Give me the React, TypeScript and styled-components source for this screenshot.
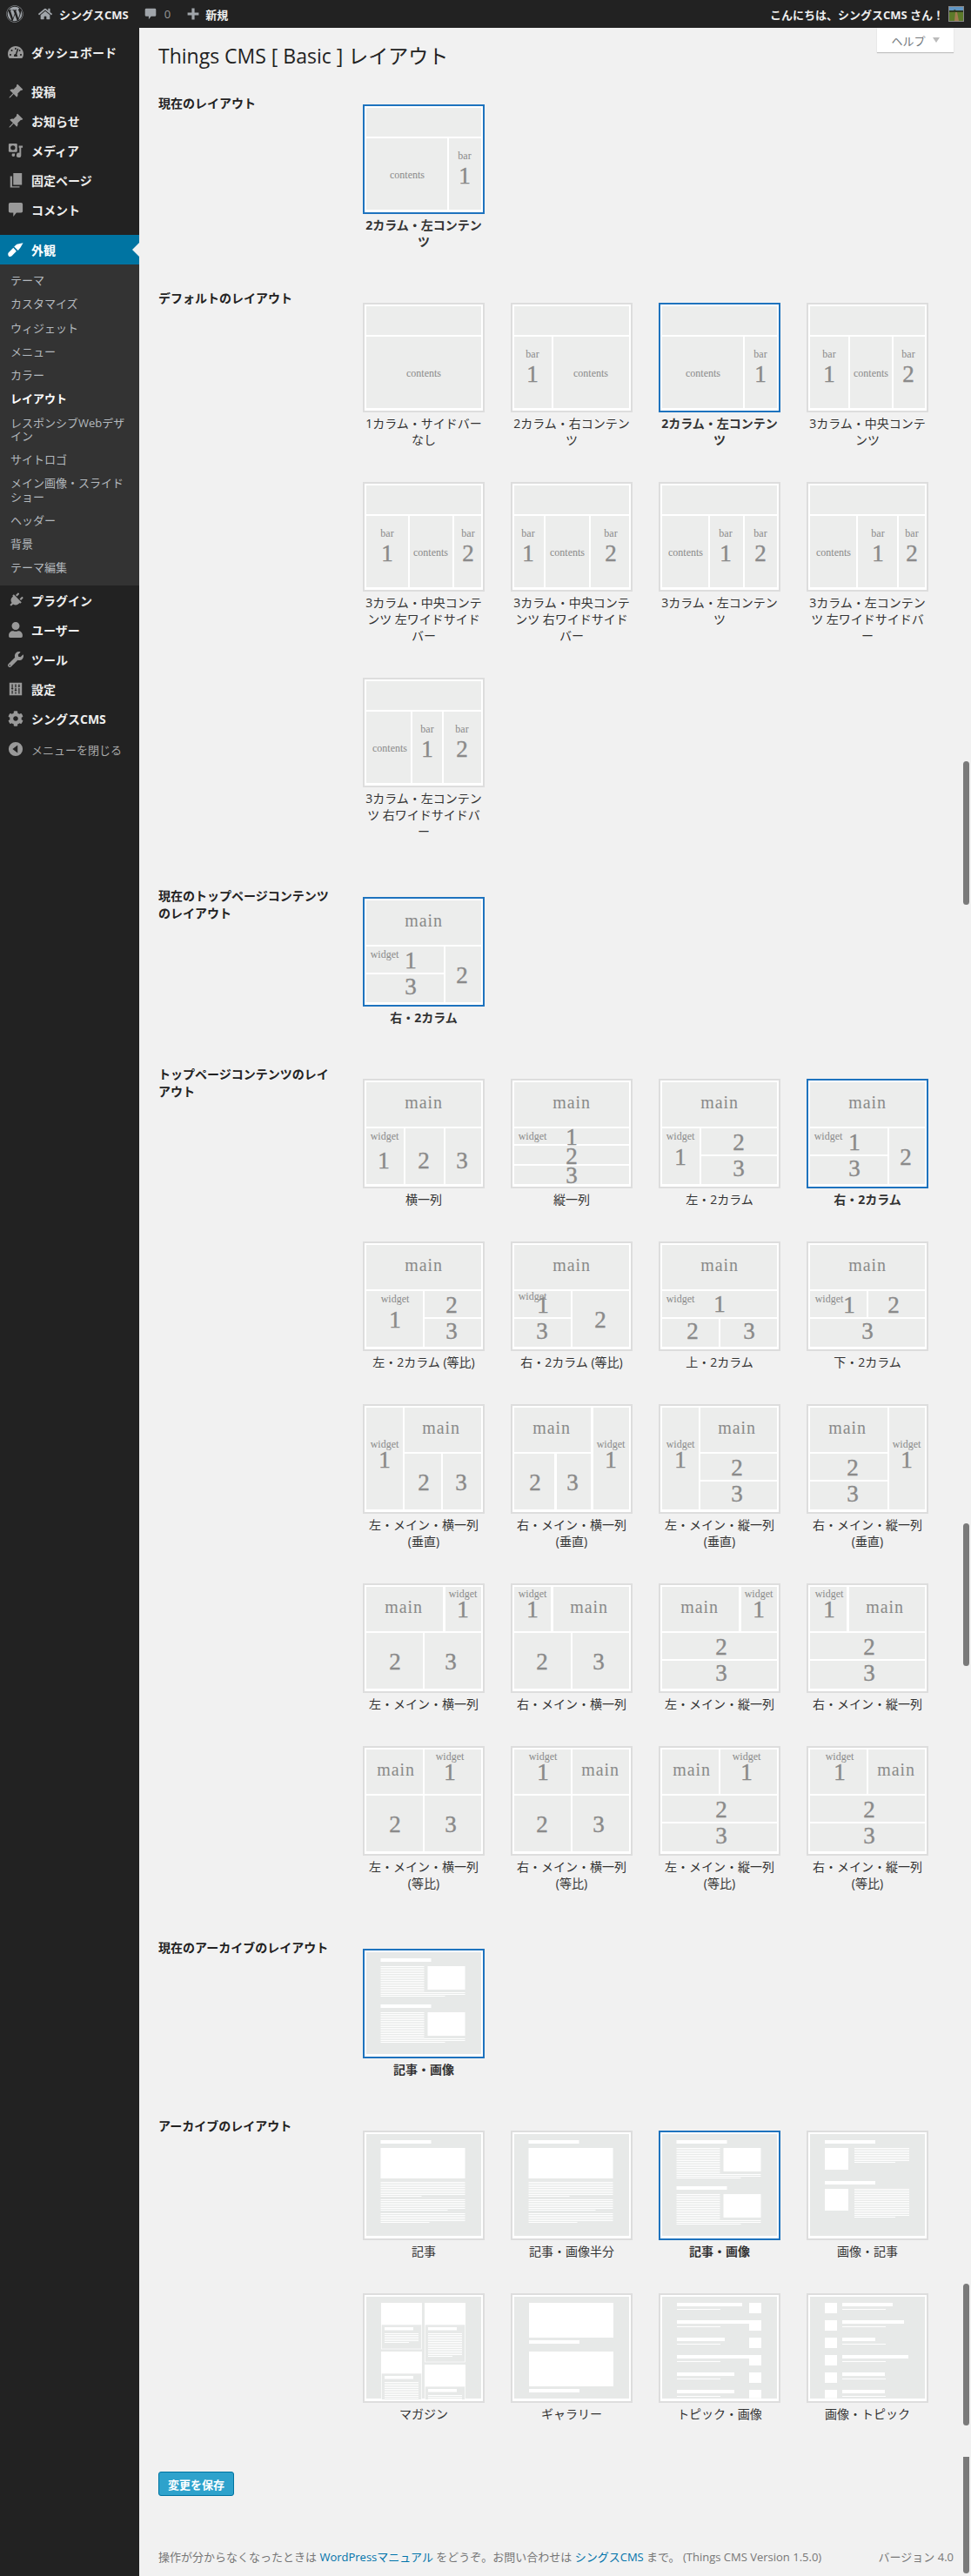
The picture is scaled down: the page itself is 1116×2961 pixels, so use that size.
import React, { FC, ReactNode } from 'react'
import styled, { createGlobalStyle, css } from 'styled-components'
import { FaWordpress, FaTachometerAlt, FaUser, FaCog, FaWrench, FaPlug, FaHome } from 'react-icons/fa'
import { BsPinAngleFill } from 'react-icons/bs'

const sans = `"Open Sans", "Noto Sans CJK JP", sans-serif`

const Global = createGlobalStyle`
  html, body { margin: 0; padding: 0; background: #f1f1f1; }
  body { font-family: ${sans}; font-size: 13px; color: #444; }
  * { box-sizing: border-box; }
`

const Page = styled.div`
  position: relative;
  width: 1116px;
  height: 2961px;
  overflow: hidden;
`

/* admin bar */
const AdminBar = styled.div`
  display: flex;
  align-items: center;
  height: 32px;
  background: #222;
  color: #eee;
  font-size: 13px;
  font-weight: 700;
`
const BarIcon = styled.span<{ $left: number; $size?: number }>`
  display: flex;
  margin-left: ${(p) => p.$left}px;
  color: #a0a5aa;
  svg {
    display: block;
    width: ${(p) => p.$size ?? 16}px;
    height: ${(p) => p.$size ?? 16}px;
  }
`
const BarText = styled.span<{ $left: number; $muted?: boolean }>`
  margin-left: ${(p) => p.$left}px;
  ${(p) =>
    p.$muted &&
    css`
      color: #999;
      font-weight: 400;
    `}
`
const Greeting = styled.div`
  display: flex;
  align-items: center;
  gap: 5px;
  margin-left: auto;
  padding-right: 8px;
`
const Avatar = styled.svg`
  display: block;
  width: 18px;
  height: 18px;
  border: 1px solid #888;
`

/* sidebar */
const Shell = styled.div`
  display: flex;
  height: 2929px;
`
const Sidebar = styled.nav`
  flex: 0 0 160px;
  padding-top: 11px;
  background: #222;
`
const MenuRow = styled.div<{ $active?: boolean }>`
  position: relative;
  display: flex;
  align-items: center;
  height: 34px;
  padding-left: 9px;
  font-size: 14px;
  font-weight: 700;
  color: #eee;
  ${(p) =>
    p.$active &&
    css`
      background: #0074a2;
      color: #fff;
      &::after {
        content: '';
        position: absolute;
        right: 0;
        top: 9px;
        border: 8px solid transparent;
        border-right-color: #f1f1f1;
        border-left-width: 0;
      }
    `}
`
const MenuIcon = styled.span<{ $active?: boolean }>`
  display: flex;
  align-items: center;
  justify-content: center;
  flex: 0 0 18px;
  height: 18px;
  margin-right: 9px;
  color: ${(p) => (p.$active ? '#fff' : '#999')};
  svg {
    display: block;
    width: 18px;
    height: 18px;
  }
`
const Separator = styled.div<{ $h: number }>`
  height: ${(p) => p.$h}px;
`
const SubMenu = styled.div`
  height: 369px;
  padding: 5px 12px 7px;
  background: #333;
`
const SubItem = styled.div<{ $current?: boolean }>`
  padding: 6px 0;
  font-size: 13px;
  line-height: 15.25px;
  color: ${(p) => (p.$current ? '#fff' : '#b4b9be')};
  font-weight: ${(p) => (p.$current ? 700 : 400)};
`
const CollapseRow = styled.div`
  display: flex;
  align-items: center;
  height: 36px;
  padding-left: 9px;
  font-size: 13px;
  color: #aaa;
`

/* main column */
const Main = styled.main`
  flex: 1;
  padding: 18px 20px 0 22px;
`
const Title = styled.h1`
  margin: 0 0 30px;
  font-size: 23px;
  font-weight: 400;
  line-height: 29px;
  color: #222;
`
const Section = styled.section`
  display: flex;
`
const SectionHead = styled.h2`
  flex: 0 0 200px;
  margin: 0 35px 0 0;
  font-size: 14px;
  font-weight: 700;
  line-height: 20px;
  color: #222;
`
const SectionBody = styled.div<{ $current?: boolean }>`
  padding: ${(p) => (p.$current ? '11px 0 7px' : '15px 0 16px')};
`
const ThumbGrid = styled.div`
  display: grid;
  grid-template-columns: repeat(4, 140px);
  column-gap: 30px;
`
const ThumbItem = styled.div`
  width: 140px;
  margin-bottom: 39px;
`
const ThumbBox = styled.div<{ $selected?: boolean }>`
  width: 140px;
  height: 126px;
  padding: 2px;
  border: 2px solid ${(p) => (p.$selected ? '#1e73be' : '#ddd')};
  background: #fff;
  svg {
    display: block;
    width: 132px;
    height: 118px;
  }
`
const ThumbLabel = styled.div<{ $selected?: boolean }>`
  margin-top: 3px;
  font-size: 14px;
  line-height: 19px;
  text-align: center;
  white-space: pre-line;
  color: #333;
  font-weight: ${(p) => (p.$selected ? 700 : 400)};
`
const Cell = styled.rect`
  fill: #ecedec;
`
const Ink = styled.text<{ $size: number; $spacing: number; $stroke: number }>`
  fill: #8a8a8a;
  stroke: #8a8a8a;
  stroke-width: ${(p) => p.$stroke};
  font-family: 'Liberation Serif', serif;
  font-size: ${(p) => p.$size}px;
  letter-spacing: ${(p) => p.$spacing}px;
  text-anchor: middle;
`
const SheetBg = styled.rect`
  fill: #e7e9e8;
`
const Bar = styled.rect`
  fill: #fff;
`
const Framed = styled.rect`
  fill: #e7e9e8;
  stroke: #fff;
  stroke-width: 0.7;
`
const SaveButton = styled.button`
  display: block;
  width: 87px;
  height: 28px;
  margin-top: 2px;
  padding: 0;
  border: 1px solid #0074a2;
  border-radius: 3px;
  background: #2ea2cc;
  color: #fff;
  font-family: ${sans};
  font-size: 13px;
  font-weight: 700;
`
const Footer = styled.footer`
  display: flex;
  justify-content: space-between;
  margin-top: 60px;
  font-size: 13px;
  line-height: 20px;
  color: #777;
`
const FootLink = styled.a`
  color: #0073aa;
`
const HelpTab = styled.div`
  position: absolute;
  top: 32px;
  left: 1008px;
  display: flex;
  align-items: center;
  justify-content: center;
  gap: 8px;
  width: 88px;
  height: 28px;
  background: #fff;
  box-shadow: 0 1px 1px rgba(0, 0, 0, 0.2);
  font-size: 13px;
  color: #72777c;
  &::after {
    content: '';
    border: 4px solid transparent;
    border-top: 6px solid #bbb;
    border-bottom-width: 0;
  }
`
const ScrollMark = styled.div<{ $top: number; $h: number; $square?: boolean }>`
  position: absolute;
  left: 1107px;
  top: ${(p) => p.$top}px;
  width: 7px;
  height: ${(p) => p.$h}px;
  background: #7a7a7a;
  border-radius: ${(p) => (p.$square ? '0 0 4px 4px' : '4px')};
`

/* thumbnails */
type Rect = [number, number, number, number]
type Label = [string, number, number]
interface Diagram {
  cells: Rect[]
  texts: Label[]
}

const isDigit = (t: string) => /^\d$/.test(t)
const sizeOf = (t: string) => (isDigit(t) ? 27 : t === 'main' ? 20 : 12)

const Diagram: FC<Diagram> = ({ cells, texts }) => (
  <svg viewBox="0 0 132 118">
    {cells.map(([a, b, c, d], i) => (
      <Cell key={i} x={a} y={b} width={c - a} height={d - b} />
    ))}
    {texts.map(([t, x, y], i) => (
      <Ink
        key={i}
        $size={sizeOf(t)}
        $spacing={t === 'main' ? 0.9 : 0}
        $stroke={isDigit(t) ? 0.4 : 0}
        x={x}
        y={y}
      >
        {t}
      </Ink>
    ))}
  </svg>
)

const head: Rect = [0, 0, 132, 33]
const col = (a: number, b: number): Rect => [a, 35, b, 117]
const barAt = (x: number, n: string): Label[] => [
  ['bar', x, 59],
  [n, x, 87],
]
const contentsAt = (x: number): Label => ['contents', x, 81]

const defaults: { label: string; selected?: boolean; d: Diagram }[] = [
  { label: '1カラム・サイドバー\nなし', d: { cells: [head, col(0, 132)], texts: [contentsAt(66)] } },
  {
    label: '2カラム・右コンテン\nツ',
    d: { cells: [head, col(0, 43), col(45, 132)], texts: [...barAt(21, '1'), contentsAt(88)] },
  },
  {
    label: '2カラム・左コンテン\nツ',
    selected: true,
    d: { cells: [head, col(0, 93), col(95, 132)], texts: [contentsAt(47), ...barAt(113, '1')] },
  },
  {
    label: '3カラム・中央コンテ\nンツ',
    d: {
      cells: [head, col(0, 44), col(46, 94), col(96, 132)],
      texts: [...barAt(22, '1'), contentsAt(70), ...barAt(113, '2')],
    },
  },
  {
    label: '3カラム・中央コンテ\nンツ 左ワイドサイド\nバー',
    d: {
      cells: [head, col(0, 48), col(50, 99), col(101, 132)],
      texts: [...barAt(24, '1'), contentsAt(74), ...barAt(117, '2')],
    },
  },
  {
    label: '3カラム・中央コンテ\nンツ 右ワイドサイド\nバー',
    d: {
      cells: [head, col(0, 34), col(36, 86), col(88, 132)],
      texts: [...barAt(16, '1'), contentsAt(61), ...barAt(111, '2')],
    },
  },
  {
    label: '3カラム・左コンテン\nツ',
    d: {
      cells: [head, col(0, 53), col(55, 93), col(95, 132)],
      texts: [contentsAt(27), ...barAt(73, '1'), ...barAt(113, '2')],
    },
  },
  {
    label: '3カラム・左コンテン\nツ 左ワイドサイドバ\nー',
    d: {
      cells: [head, col(0, 53), col(55, 100), col(102, 132)],
      texts: [contentsAt(27), ...barAt(78, '1'), ...barAt(117, '2')],
    },
  },
  {
    label: '3カラム・左コンテン\nツ 右ワイドサイドバ\nー',
    d: {
      cells: [head, col(0, 51), col(53, 87), col(89, 132)],
      texts: [contentsAt(27), ...barAt(70, '1'), ...barAt(110, '2')],
    },
  },
]

const mainTop: Rect = [0, 0, 132, 51]
const mainL: Label = ['main', 66, 30]

// top page layouts, in the order they are listed
const right2: Diagram = {
  cells: [mainTop, [0, 53, 89, 83], [0, 85, 89, 117], [91, 53, 132, 117]],
  texts: [mainL, ['widget', 21, 66], ['1', 51, 78], ['3', 51, 108], ['2', 110, 95]],
}

const topPage: { label: string; selected?: boolean; d: Diagram }[] = [
  {
    label: '横一列',
    d: {
      cells: [mainTop, [0, 53, 43, 117], [45, 53, 89, 117], [91, 53, 132, 117]],
      texts: [mainL, ['widget', 21, 66], ['1', 20, 99], ['2', 66, 99], ['3', 110, 99]],
    },
  },
  {
    label: '縦一列',
    d: {
      cells: [mainTop, [0, 53, 132, 71], [0, 73, 132, 94], [0, 96, 132, 117]],
      texts: [mainL, ['widget', 21, 66], ['1', 66, 72], ['2', 66, 94], ['3', 66, 116]],
    },
  },
  {
    label: '左・2カラム',
    d: {
      cells: [mainTop, [0, 53, 43, 117], [45, 53, 132, 83], [45, 85, 132, 117]],
      texts: [mainL, ['widget', 21, 66], ['1', 21, 95], ['2', 88, 78], ['3', 88, 108]],
    },
  },
  { label: '右・2カラム', selected: true, d: right2 },
  {
    label: '左・2カラム (等比)',
    d: {
      cells: [mainTop, [0, 53, 65, 117], [67, 53, 132, 83], [67, 85, 132, 117]],
      texts: [mainL, ['widget', 33, 66], ['1', 33, 95], ['2', 98, 78], ['3', 98, 108]],
    },
  },
  {
    label: '右・2カラム (等比)',
    d: {
      cells: [mainTop, [0, 53, 65, 83], [0, 85, 65, 117], [67, 53, 132, 117]],
      texts: [mainL, ['widget', 21, 63], ['1', 33, 78], ['3', 32, 108], ['2', 99, 95]],
    },
  },
  {
    label: '上・2カラム',
    d: {
      cells: [mainTop, [0, 53, 132, 83], [0, 85, 65, 117], [67, 85, 132, 117]],
      texts: [mainL, ['widget', 21, 66], ['1', 66, 77], ['2', 35, 108], ['3', 100, 108]],
    },
  },
  {
    label: '下・2カラム',
    d: {
      cells: [mainTop, [0, 53, 65, 83], [67, 53, 132, 83], [0, 85, 132, 117]],
      texts: [mainL, ['widget', 22, 66], ['1', 45, 78], ['2', 96, 78], ['3', 66, 108]],
    },
  },
  {
    label: '左・メイン・横一列\n(垂直)',
    d: {
      cells: [[0, 0, 42, 117], [44, 0, 132, 51], [44, 53, 86, 117], [88, 53, 132, 117]],
      texts: [['widget', 21, 46], ['1', 21, 69], ['main', 86, 30], ['2', 66, 95], ['3', 109, 95]],
    },
  },
  {
    label: '右・メイン・横一列\n(垂直)',
    d: {
      cells: [[0, 0, 88, 51], [0, 53, 46, 117], [49, 53, 88, 117], [91, 0, 132, 117]],
      texts: [['main', 43, 30], ['widget', 111, 46], ['1', 111, 69], ['2', 24, 95], ['3', 67, 95]],
    },
  },
  {
    label: '左・メイン・縦一列\n(垂直)',
    d: {
      cells: [[0, 0, 42, 117], [44, 0, 132, 51], [44, 53, 132, 83], [44, 85, 132, 117]],
      texts: [['widget', 21, 46], ['1', 21, 69], ['main', 86, 30], ['2', 86, 78], ['3', 86, 108]],
    },
  },
  {
    label: '右・メイン・縦一列\n(垂直)',
    d: {
      cells: [[0, 0, 89, 51], [0, 53, 89, 83], [0, 85, 89, 117], [91, 0, 132, 117]],
      texts: [['main', 43, 30], ['widget', 111, 46], ['1', 111, 69], ['2', 49, 78], ['3', 49, 108]],
    },
  },
  {
    label: '左・メイン・横一列',
    d: {
      cells: [[0, 0, 88, 51], [91, 0, 132, 51], [0, 53, 65, 117], [67, 53, 132, 117]],
      texts: [['main', 43, 30], ['widget', 111, 12], ['1', 111, 35], ['2', 33, 95], ['3', 97, 95]],
    },
  },
  {
    label: '右・メイン・横一列',
    d: {
      cells: [[0, 0, 42, 51], [45, 0, 132, 51], [0, 53, 65, 117], [67, 53, 132, 117]],
      texts: [['widget', 21, 12], ['1', 21, 35], ['main', 86, 30], ['2', 32, 95], ['3', 97, 95]],
    },
  },
  {
    label: '左・メイン・縦一列',
    d: {
      cells: [[0, 0, 88, 51], [91, 0, 132, 51], [0, 53, 132, 83], [0, 85, 132, 117]],
      texts: [['main', 43, 30], ['widget', 111, 12], ['1', 111, 35], ['2', 68, 78], ['3', 68, 108]],
    },
  },
  {
    label: '右・メイン・縦一列',
    d: {
      cells: [[0, 0, 42, 51], [45, 0, 132, 51], [0, 53, 132, 83], [0, 85, 132, 117]],
      texts: [['widget', 22, 12], ['1', 22, 35], ['main', 86, 30], ['2', 68, 78], ['3', 68, 108]],
    },
  },
  {
    label: '左・メイン・横一列\n(等比)',
    d: {
      cells: [[0, 0, 65, 51], [67, 0, 132, 51], [0, 53, 65, 117], [67, 53, 132, 117]],
      texts: [['main', 34, 30], ['widget', 96, 12], ['1', 96, 35], ['2', 33, 95], ['3', 97, 95]],
    },
  },
  {
    label: '右・メイン・横一列\n(等比)',
    d: {
      cells: [[0, 0, 65, 51], [67, 0, 132, 51], [0, 53, 65, 117], [67, 53, 132, 117]],
      texts: [['widget', 33, 12], ['1', 33, 35], ['main', 99, 30], ['2', 32, 95], ['3', 97, 95]],
    },
  },
  {
    label: '左・メイン・縦一列\n(等比)',
    d: {
      cells: [[0, 0, 65, 51], [67, 0, 132, 51], [0, 53, 132, 83], [0, 85, 132, 117]],
      texts: [['main', 34, 30], ['widget', 97, 12], ['1', 97, 35], ['2', 68, 78], ['3', 68, 108]],
    },
  },
  {
    label: '右・メイン・縦一列\n(等比)',
    d: {
      cells: [[0, 0, 65, 51], [67, 0, 132, 51], [0, 53, 132, 83], [0, 85, 132, 117]],
      texts: [['widget', 34, 12], ['1', 34, 35], ['main', 99, 30], ['2', 68, 78], ['3', 68, 108]],
    },
  },
]

const lines = (x: number, y: number, w: number, n: number, lastW: number) =>
  Array.from({ length: n }, (_, i) => (
    <Bar key={`${x}-${y}-${i}`} x={x} y={y + i * 2} width={i === n - 1 ? lastW : w} height={1} />
  ))

const Sheet: FC<{ children: ReactNode }> = ({ children }) => (
  <svg viewBox="0 0 132 118">
    <SheetBg x={0} y={0} width={132} height={117} />
    {children}
  </svg>
)

const ArticleBlock: FC<{ y: number }> = ({ y }) => (
  <>
    <Bar x={16.5} y={y} width={58} height={4} />
    {lines(16.5, y + 9, 50, 15, 50)}
    <Bar x={70.5} y={y + 9} width={43} height={27} />
    {lines(16.5, y + 39, 97, 3, 74)}
  </>
)

const ArticleSheet: FC = () => (
  <Sheet>
    <Bar x={16.5} y={7} width={58} height={4} />
    <Bar x={16.5} y={16} width={97} height={35} />
    {lines(16.5, 55, 97, 9, 47)}
    {lines(16.5, 75, 97, 7, 77)}
    {lines(16.5, 91, 97, 6, 56)}
  </Sheet>
)

const ArticleImage: FC = () => (
  <Sheet>
    <ArticleBlock y={7} />
    <ArticleBlock y={60} />
  </Sheet>
)

const ImageArticle: FC = () => (
  <Sheet>
    <Bar x={17} y={7} width={58} height={4} />
    <Bar x={17} y={16} width={27} height={25} />
    {lines(51, 16, 63, 9, 47)}
    <Bar x={17} y={54} width={58} height={4} />
    <Bar x={17} y={63} width={27} height={25} />
    {lines(51, 63, 63, 17, 47)}
  </Sheet>
)

const MagCard: FC<{ x: number; y: number; panel: number }> = ({ x, y, panel }) => (
  <>
    <Bar x={x} y={y} width={47} height={25} />
    <Framed x={x + 0.5} y={y + 25} width={46} height={panel} />
    <Bar x={x + 4} y={y + 28} width={33} height={3.5} />
    {lines(x + 4, y + 35, 39, Math.floor((panel - 15) / 2), 28)}
  </>
)

const Magazine: FC = () => (
  <Sheet>
    <MagCard x={17} y={7} panel={28} />
    <MagCard x={67} y={7} panel={43} />
    <MagCard x={17} y={63} panel={50} />
    <MagCard x={67} y={78} panel={50} />
  </Sheet>
)

const Gallery: FC = () => (
  <Sheet>
    <Bar x={17} y={7} width={97} height={40} />
    <Bar x={17} y={50} width={58} height={4} />
    <Bar x={17} y={63} width={97} height={40} />
    <Bar x={17} y={106} width={58} height={4} />
  </Sheet>
)

const topicWidths = [58, 71, 38, 76, 49, 49]

const Topics: FC<{ imageLeft?: boolean }> = ({ imageLeft }) => (
  <Sheet>
    {topicWidths.map((w, i) => {
      const y = 7 + i * 20
      const h = Math.min(12, 116.7 - y)
      return (
        <React.Fragment key={i}>
          <Bar x={imageLeft ? 37 : 17} y={y} width={imageLeft ? w : w + 17} height={4} />
          <Bar x={imageLeft ? 37 : 17} y={y + 7} width={50} height={1} />
          <Bar x={imageLeft ? 17 : 100} y={y} width={14} height={h} />
        </React.Fragment>
      )
    })}
  </Sheet>
)

const Thumb: FC<{ label: string; selected?: boolean; children: ReactNode }> = ({
  label,
  selected,
  children,
}) => (
  <ThumbItem>
    <ThumbBox $selected={selected}>{children}</ThumbBox>
    <ThumbLabel $selected={selected}>{label}</ThumbLabel>
  </ThumbItem>
)

/* icons that the packages don't have in this shape */
const MediaIcon = () => (
  <svg viewBox="0 0 20 20" fill="currentColor">
    <path
      fillRule="evenodd"
      d="M2 1h9l1 1v9l-1 1H2l-1-1V2zm4.500 2.500a3 3 0 100 6 3 3 0 000-6zM14 4h5v2.500h-2V16a3 3 0 11-2.200-2.900V6.500H14zM6 14h3v1.500a2 2 0 11-2-1.800z"
    />
  </svg>
)
const PagesIcon = () => (
  <svg viewBox="0 0 20 20" fill="currentColor">
    <path d="M7 1h11v15H7zM3 5h2.500v13H15v1.500H3z" />
  </svg>
)
const CommentIcon = () => (
  <svg viewBox="0 0 20 20" fill="currentColor">
    <path d="M3 1h14a2 2 0 012 2v9a2 2 0 01-2 2h-6l-4 5v-5H3a2 2 0 01-2-2V3a2 2 0 012-2z" />
  </svg>
)
const BrushIcon = () => (
  <svg viewBox="0 0 20 20" fill="currentColor">
    <path d="M19.500 1.500l-8 1.500-3.500 3 5 5 3-3.500zM7 7.500l-6 6c-1 1-1 3 0 4.500s3 1 4 0l6-6z" />
  </svg>
)
const SettingsIcon = () => (
  <svg viewBox="0 0 20 20" fill="currentColor">
    <path
      fillRule="evenodd"
      d="M2 2h16v16H2zM5 4v5H4l1.700 2L7.400 9H6.300V4zM5 12v4h1.300v-4zM9.300 4v4h1.400V4zM8.200 11l1.800 2 1.800-2h-1.100V9H9.300v2zM9.300 14v2h1.400v-2zM13.700 4v2h-1.200l1.800 2 1.700-2H15V4zM13.700 9v7H15V9z"
    />
  </svg>
)
const CollapseIcon = () => (
  <svg viewBox="0 0 20 20" fill="currentColor">
    <path fillRule="evenodd" d="M10 1a9 9 0 100 18 9 9 0 000-18zM12.500 5v10L6 10z" />
  </svg>
)
const PlusIcon = () => (
  <svg viewBox="0 0 20 20" fill="currentColor">
    <path d="M8 2h4v6h6v4h-6v6H8v-6H2V8h6z" />
  </svg>
)
const PlugIcon = styled(FaPlug)`
  transform: rotate(45deg) scale(0.95);
`

const submenu = [
  'テーマ',
  'カスタマイズ',
  'ウィジェット',
  'メニュー',
  'カラー',
  'レイアウト',
  'レスポンシブWebデザイン',
  'サイトロゴ',
  'メイン画像・スライドショー',
  'ヘッダー',
  '背景',
  'テーマ編集',
]

const MenuEntry: FC<{ icon: ReactNode; children: ReactNode; active?: boolean }> = ({
  icon,
  children,
  active,
}) => (
  <MenuRow $active={active}>
    <MenuIcon $active={active}>{icon}</MenuIcon>
    {children}
  </MenuRow>
)

export default function App() {
  return (
    <Page>
      <Global />
      <AdminBar>
        <BarIcon $left={7} $size={20}>
          <FaWordpress />
        </BarIcon>
        <BarIcon $left={17}>
          <FaHome />
        </BarIcon>
        <BarText $left={8}>シングスCMS</BarText>
        <BarIcon $left={18} $size={14}>
          <CommentIcon />
        </BarIcon>
        <BarText $left={9} $muted>
          0
        </BarText>
        <BarIcon $left={18} $size={16}>
          <PlusIcon />
        </BarIcon>
        <BarText $left={6}>新規</BarText>
        <Greeting>
          こんにちは、シングスCMS さん！
          <Avatar viewBox="0 0 16 16">
            <rect width="16" height="16" fill="#5c7a2a" />
            <rect width="16" height="4" fill="#5f95c4" />
            <path d="M0 4h5l1-1 2 1h8v2H0z" fill="#2f3a1e" />
            <path d="M7 6h2l2 10H6z" fill="#a37b52" />
          </Avatar>
        </Greeting>
      </AdminBar>
      <Shell>
        <Sidebar>
          <MenuEntry icon={<FaTachometerAlt />}>ダッシュボード</MenuEntry>
          <Separator $h={11} />
          <MenuEntry icon={<BsPinAngleFill />}>投稿</MenuEntry>
          <MenuEntry icon={<BsPinAngleFill />}>お知らせ</MenuEntry>
          <MenuEntry icon={<MediaIcon />}>メディア</MenuEntry>
          <MenuEntry icon={<PagesIcon />}>固定ページ</MenuEntry>
          <MenuEntry icon={<CommentIcon />}>コメント</MenuEntry>
          <Separator $h={12} />
          <MenuEntry icon={<BrushIcon />} active>
            外観
          </MenuEntry>
          <SubMenu>
            {submenu.map((s) => (
              <SubItem key={s} $current={s === 'レイアウト'}>
                {s}
              </SubItem>
            ))}
          </SubMenu>
          <MenuEntry icon={<PlugIcon />}>プラグイン</MenuEntry>
          <MenuEntry icon={<FaUser />}>ユーザー</MenuEntry>
          <MenuEntry icon={<FaWrench />}>ツール</MenuEntry>
          <MenuEntry icon={<SettingsIcon />}>設定</MenuEntry>
          <MenuEntry icon={<FaCog />}>シングスCMS</MenuEntry>
          <CollapseRow>
            <MenuIcon>
              <CollapseIcon />
            </MenuIcon>
            メニューを閉じる
          </CollapseRow>
        </Sidebar>
        <Main>
          <Title>Things CMS [ Basic ] レイアウト</Title>

          <Section>
            <SectionHead>現在のレイアウト</SectionHead>
            <SectionBody $current>
              <Thumb label={defaults[2].label} selected>
                <Diagram {...defaults[2].d} />
              </Thumb>
            </SectionBody>
          </Section>

          <Section>
            <SectionHead>デフォルトのレイアウト</SectionHead>
            <SectionBody>
              <ThumbGrid>
                {defaults.map((l) => (
                  <Thumb key={l.label} label={l.label} selected={l.selected}>
                    <Diagram {...l.d} />
                  </Thumb>
                ))}
              </ThumbGrid>
            </SectionBody>
          </Section>

          <Section>
            <SectionHead>現在のトップページコンテンツのレイアウト</SectionHead>
            <SectionBody $current>
              <Thumb label="右・2カラム" selected>
                <Diagram {...right2} />
              </Thumb>
            </SectionBody>
          </Section>

          <Section>
            <SectionHead>トップページコンテンツのレイアウト</SectionHead>
            <SectionBody>
              <ThumbGrid>
                {topPage.map((l) => (
                  <Thumb key={l.label} label={l.label} selected={l.selected}>
                    <Diagram {...l.d} />
                  </Thumb>
                ))}
              </ThumbGrid>
            </SectionBody>
          </Section>

          <Section>
            <SectionHead>現在のアーカイブのレイアウト</SectionHead>
            <SectionBody $current>
              <Thumb label="記事・画像" selected>
                <ArticleImage />
              </Thumb>
            </SectionBody>
          </Section>

          <Section>
            <SectionHead>アーカイブのレイアウト</SectionHead>
            <SectionBody>
              <ThumbGrid>
                <Thumb label="記事">
                  <ArticleSheet />
                </Thumb>
                <Thumb label="記事・画像半分">
                  <ArticleSheet />
                </Thumb>
                <Thumb label="記事・画像" selected>
                  <ArticleImage />
                </Thumb>
                <Thumb label="画像・記事">
                  <ImageArticle />
                </Thumb>
                <Thumb label="マガジン">
                  <Magazine />
                </Thumb>
                <Thumb label="ギャラリー">
                  <Gallery />
                </Thumb>
                <Thumb label="トピック・画像">
                  <Topics />
                </Thumb>
                <Thumb label="画像・トピック">
                  <Topics imageLeft />
                </Thumb>
              </ThumbGrid>
            </SectionBody>
          </Section>

          <SaveButton>変更を保存</SaveButton>
          <Footer>
            <span>
              操作が分からなくなったときは <FootLink>WordPressマニュアル</FootLink> をどうぞ。お問い合わせは{' '}
              <FootLink>シングスCMS</FootLink> まで。 (Things CMS Version 1.5.0)
            </span>
            <span>バージョン 4.0</span>
          </Footer>
        </Main>
      </Shell>
      <HelpTab>ヘルプ</HelpTab>
      <ScrollMark $top={875} $h={165} />
      <ScrollMark $top={1751} $h={164} />
      <ScrollMark $top={2625} $h={163} />
      <ScrollMark $top={2824} $h={134} $square />
    </Page>
  )
}
